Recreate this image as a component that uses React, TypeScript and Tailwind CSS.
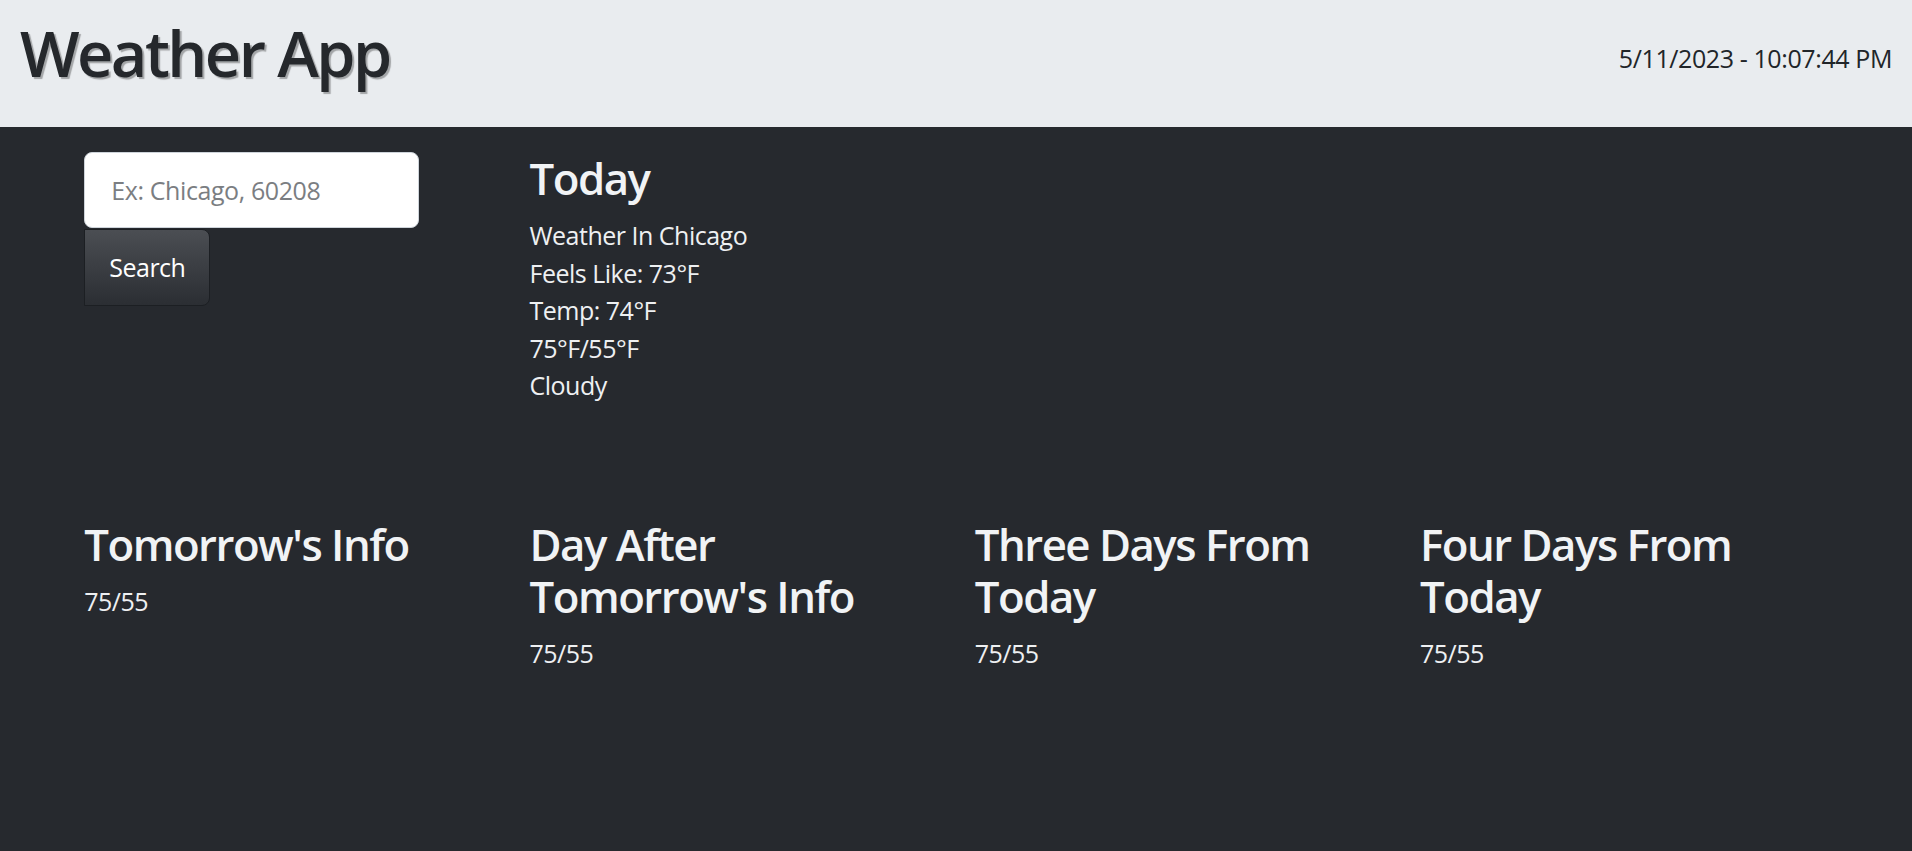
import React from "react";

const font = { fontFamily: '"Open Sans", "Noto Sans", sans-serif' };

const forecast = [
  { title: "Tomorrow's Info", temp: "75/55" },
  { title: "Day After Tomorrow's Info", temp: "75/55" },
  { title: "Three Days From Today", temp: "75/55" },
  { title: "Four Days From Today", temp: "75/55" },
];

export default function App() {
  return (
    <div className="min-h-[851px] bg-[#26292e]" style={font}>
      <header className="h-[127px] bg-[#e9ecef] flex items-start justify-between px-[20px]">
        <h1 className="mt-[15px] text-[63px] leading-[1.2] font-semibold tracking-[-2.5px] text-[#25282c] [text-shadow:2px_2px_1px_rgba(0,0,0,0.3)]">
          Weather App
        </h1>
        <div className="mt-[40px] text-[25px] leading-[1.5] tracking-[-0.4px] text-[#212529]">5/11/2023 - 10:07:44 PM</div>
      </header>

      <main className="w-[1781px] mx-auto">
        <div className="flex pt-[25px]">
          <div className="w-1/4 px-[18.75px] flex flex-col items-start">
            <input
              type="text"
              placeholder="Ex: Chicago, 60208"
              className="w-[335px] h-[76px] bg-white border border-[#ced4da] rounded-[8px] px-[26px] text-[25px] tracking-[-0.4px] text-[#212529] placeholder:text-[#7b7e82] outline-none"
            />
            <button className="mt-[1px] h-[77px] px-[24px] text-[25px] tracking-[-0.5px] text-white rounded-r-[8px] border border-[#1c1f23] bg-gradient-to-b from-[#4b4e53] to-[#2b2e33]">
              Search
            </button>
          </div>
          <div className="w-1/4 px-[18.75px] text-[#f1f3f5]">
            <h3 className="text-[43.75px] leading-[1.2] font-semibold tracking-[-1.5px] mb-[12.5px]">Today</h3>
            <div className="text-[25px] leading-[1.5] tracking-[-0.5px] text-[#eef0f2]">
              <p>Weather In Chicago</p>
              <p>Feels Like: 73°F</p>
              <p>Temp: 74°F</p>
              <p>75°F/55°F</p>
              <p>Cloudy</p>
            </div>
          </div>
        </div>

        <div className="flex mt-[113px]">
          {forecast.map((d) => (
            <div key={d.title} className="w-1/4 px-[18.75px] text-[#f1f3f5]">
              <h3 className="text-[43.75px] leading-[1.2] font-semibold tracking-[-1.5px] mb-[12.5px]">{d.title}</h3>
              <p className="text-[25px] leading-[1.5] tracking-[-0.5px] text-[#eef0f2]">{d.temp}</p>
            </div>
          ))}
        </div>
      </main>
    </div>
  );
}
